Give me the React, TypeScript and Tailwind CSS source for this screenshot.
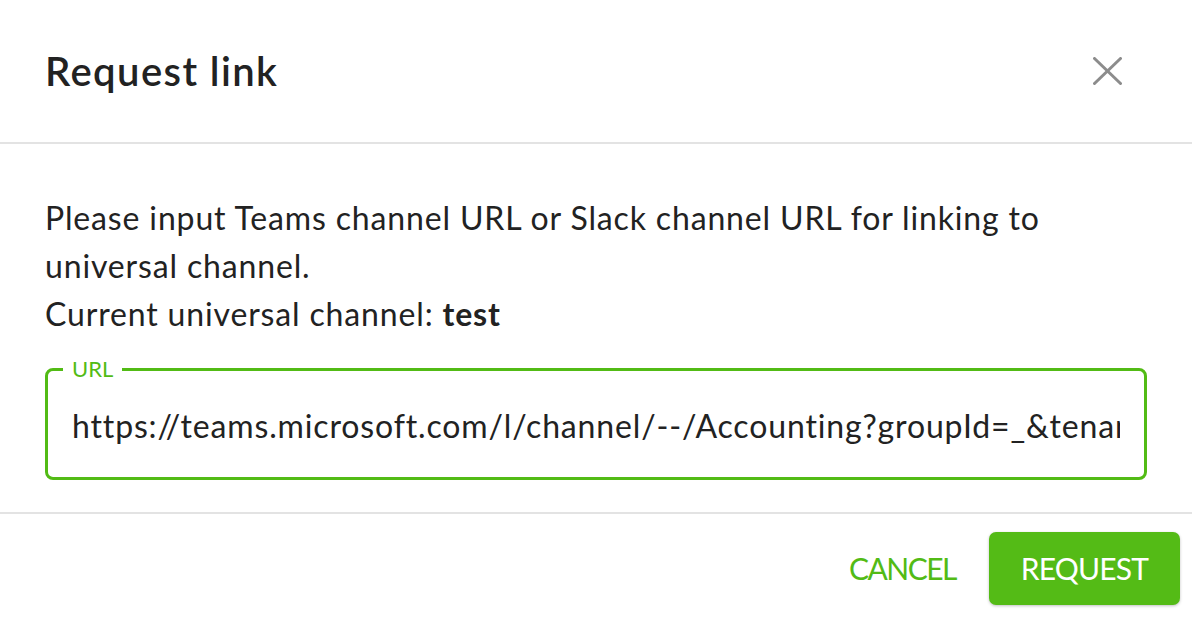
const App = () => {
  const green = "text-[#52bb15]";

  return (
    <div className="w-[1192px] h-[620px] bg-white text-[#222222] font-['Lato','Liberation_Sans',sans-serif] flex flex-col overflow-hidden">
      {/* HEADER */}
      <div className="h-[144px] shrink-0 flex items-center justify-between pl-[45px] pr-[70px] border-b-2 border-[#e3e3e3]">
        <h2 className="text-[40px] leading-none font-semibold tracking-[1.4px]">Request link</h2>
        <button className="text-[#8c8c8c]">
          <svg width="29" height="28" viewBox="0 0 29 28" fill="none" stroke="currentColor" strokeWidth="3" strokeLinecap="round">
            <line x1="1.5" y1="1.5" x2="27.5" y2="26.5" />
            <line x1="27.5" y1="1.5" x2="1.5" y2="26.5" />
          </svg>
        </button>
      </div>

      {/* BODY */}
      <div className="px-[45px] pt-[50px] pb-[32px] border-b-2 border-[#e3e3e3]">
        <p className="text-[32px] leading-[48px] tracking-[0.85px]">
          Please input Teams channel URL or Slack channel URL for linking to
          <br />
          universal channel.
          <br />
          Current universal channel: <span className="font-bold">test</span>
        </p>

        <fieldset className="min-w-0 mt-[16px] h-[126px] border-[3px] border-[#52bb15] rounded-[8px] px-[15px]">
          <legend className={`px-[9px] text-[22px] leading-[30px] ${green}`}>URL</legend>
          <input
            readOnly
            className="w-full px-[9px] mt-[18px] h-[48px] text-[32px] tracking-[0.85px] text-[#222222] outline-none bg-transparent"
            value="https://teams.microsoft.com/l/channel/--/Accounting?groupId=_&tenantId=_"
          />
        </fieldset>
      </div>

      {/* FOOTER */}
      <div className="flex items-center justify-end gap-[33px] pt-[18px] pr-[12px]">
        <button className={`text-[30px] tracking-[-1.5px] ${green}`}>CANCEL</button>
        <button className="w-[191px] h-[73px] rounded-[7px] bg-[#54bb16] text-white text-[30px] tracking-[-0.8px] shadow-[0_1px_3px_rgba(0,0,0,0.25)]">
          REQUEST
        </button>
      </div>
    </div>
  );
};

export default App;
